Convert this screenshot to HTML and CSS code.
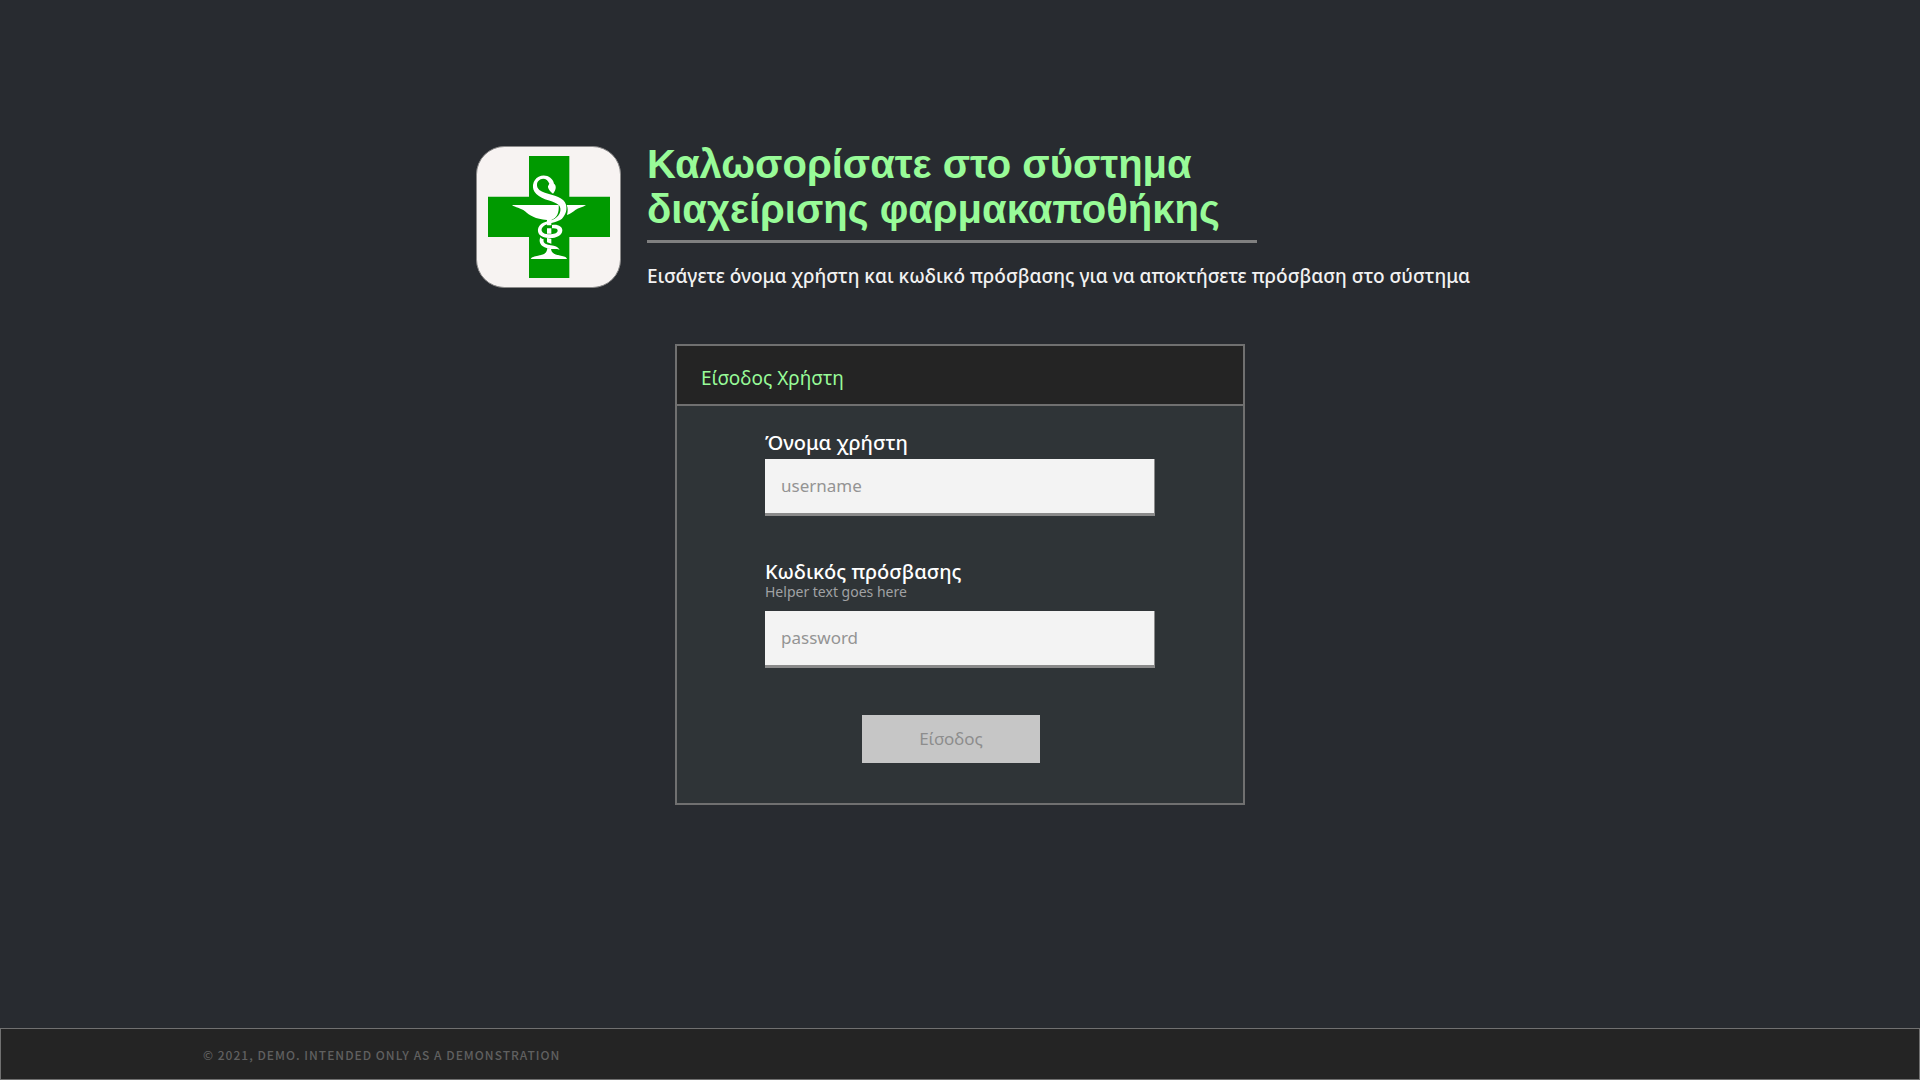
FILE: index.html
```html
<!DOCTYPE html>
<html lang="el">
<head>
<meta charset="utf-8">
<meta name="viewport" content="width=device-width, initial-scale=1">
<title>Είσοδος Χρήστη</title>
<link rel="stylesheet" href="styles.css">
</head>
<body>
<main class="content">
  <header class="hero">
    <svg class="logo" viewBox="30 30 435 426" role="img" aria-label="Φαρμακείο">
      <rect x="31.500" y="31.500" width="432" height="423" rx="84" fill="#f7f3f2" stroke="#8b8a8a" stroke-width="3"/>
      <path d="M189 60H310V182H432V303H310V426H189V303H66V182H189Z" fill="#009a00"/>
      <g fill="#fff">
        <path d="M138 207H278C280 228 274 246 256 252V268H243V252C208 250 190 238 177 226C164 215 148 215 138 207Z"/>
        <path d="M308 207H360C350 215 338 214 328 222C320 228 314 233 303 237C306 226 306 216 302 207Z"/>
        <path d="M243 277H256V293H243ZM243 306L256 308V323L243 319ZM244 336L255 338C256 352 268 356 288 360C297 362 302 364 303 369H194C196 363 206 361 216 359C234 356 243 352 244 336Z"/>
        <path d="M250 143C246 132 235 125 224 130C211 136 209 152 220 162C238 176 276 176 292 193C307 208 303 233 288 248C275 260 244 259 231 272C222 281 228 292 241 294C256 296 275 293 275 284C275 278 268 276 258 277V267C276 264 290 272 289 284C287 302 262 309 241 305C222 303 212 290 217 275C224 256 251 256 266 248C283 238 288 220 279 208C266 194 229 193 211 174C194 157 200 131 218 122C239 113 260 124 264 143C272 149 271 161 261 173C251 167 245 156 246 151Z"/>
        <path d="M223 304C226 308 230 309 233 310C229 324 244 326 255 328C267 329 275 333 281 341C268 337 257 342 242 336C224 332 217 318 223 304Z"/>
      </g>
    </svg>
    <div class="hero-text">
      <h1 class="title">Καλωσορίσατε στο σύστημα<br>διαχείρισης φαρμακαποθήκης</h1>
      <p class="subtitle">Εισάγετε όνομα χρήστη και κωδικό πρόσβασης για να αποκτήσετε πρόσβαση στο σύστημα</p>
    </div>
  </header>
  <section class="panel">
    <h2 class="panel-title">Είσοδος Χρήστη</h2>
    <form class="form">
      <div class="field">
        <label class="label" for="username">Όνομα χρήστη</label>
        <input class="input" id="username" type="text" placeholder="username">
      </div>
      <div class="field">
        <label class="label" for="password">Κωδικός πρόσβασης</label>
        <p class="helper" id="password-help">Helper text goes here</p>
        <input class="input" id="password" type="password" placeholder="password" aria-describedby="password-help">
      </div>
      <button class="submit" type="submit" disabled>Είσοδος</button>
    </form>
  </section>
</main>
<footer class="footer">© 2021, DEMO. INTENDED ONLY AS A DEMONSTRATION</footer>
</body>
</html>
```
FILE: styles.css
```css
* {
  box-sizing: border-box;
}

body {
  margin: 0;
  min-height: 100vh;
  display: flex;
  flex-direction: column;
  background: #282b30;
  color: #f2f2f2;
  font-family: "Noto Sans", "Open Sans", sans-serif;
}

h1, h2, p {
  margin: 0;
}

.content {
  flex: 1;
  padding: 142px 16px 48px;
}

.hero {
  display: flex;
  gap: 26px;
  max-width: 968px;
  margin: 0 auto 54px;
}

.logo {
  flex: none;
  width: 145px;
  height: 142px;
  margin-top: 4px;
}

.title {
  width: 610px;
  padding-bottom: 8px;
  border-bottom: 3px solid #808080;
  color: #98fb98;
  font: bold 40px/45px "Liberation Sans", Arial, sans-serif;
  white-space: nowrap;
}

.subtitle {
  margin-top: 19px;
  font-size: 19px;
  font-weight: 500;
  line-height: 28px;
  white-space: nowrap;
}

.panel {
  max-width: 570px;
  margin: 0 auto;
  border: 2px solid #707070;
  background: #2f3437;
}

.panel-title {
  padding: 18px 24px 12px;
  border-bottom: 2px solid #707070;
  background: #242424;
  color: #98fb98;
  font-size: 19px;
  font-weight: 400;
  line-height: 28px;
}

.form {
  display: flex;
  flex-direction: column;
  gap: 43px;
  padding: 24px 88px 40px;
}

.field {
  display: flex;
  flex-direction: column;
}

.label {
  margin-bottom: 3px;
  color: #fff;
  font-size: 20px;
  font-weight: 500;
  line-height: 26px;
}

.helper {
  margin: -5px 0 10px;
  color: #a0a2a4;
  font-size: 14px;
  line-height: 18px;
}

.input {
  width: 100%;
  height: 57px;
  padding: 0 16px 2px;
  border: 0;
  border-right: 1px solid #8a8a8a;
  border-bottom: 3px solid #8a8a8a;
  border-radius: 0;
  background: #f3f3f3;
  color: #333;
  font: 17px/24px "Noto Sans", sans-serif;
}

.input::placeholder {
  color: #949494;
  opacity: 1;
}

.submit {
  width: 178px;
  height: 48px;
  margin: 4px 0 0 97px;
  border: 0;
  background: #c6c6c6;
  color: #8d8d8d;
  font: 17px/24px "Noto Sans", sans-serif;
}

.footer {
  padding: 16px 202px 14px;
  border: 1px solid #707070;
  background: #242424;
  color: #606060;
  font: 500 12px/20px "Noto Sans CJK SC", sans-serif;
  letter-spacing: 1px;
}
```
